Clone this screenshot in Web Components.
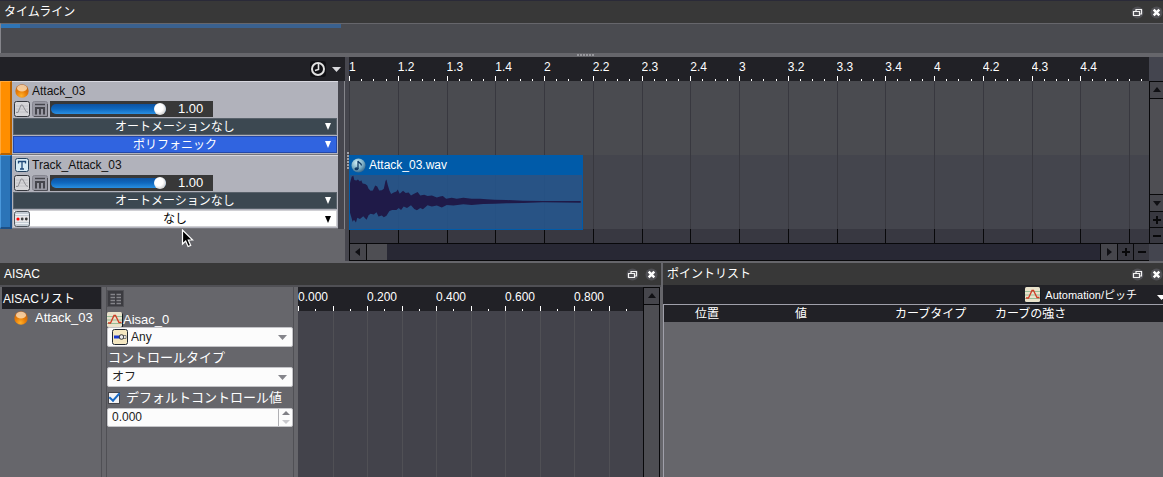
<!DOCTYPE html>
<html lang="ja">
<head>
<meta charset="utf-8">
<title>タイムライン</title>
<style>
html{height:100%}
body{margin:0;min-height:100%;display:flex;background:#66666b;color:#fff;font:12px/16px "Liberation Sans","Noto Sans CJK JP",sans-serif;overflow:hidden}
</style>
</head>
<body>
<audio-workspace></audio-workspace>
<script>
const ICONS = {
  clock: [16,16,'<rect width="16" height="16" rx="3" fill="#101014"/><circle cx="8" cy="8" r="6" fill="none" stroke="#e0e0e0" stroke-width="2"/><path d="M8.5 3v5.5L5 9.5" fill="none" stroke="#e0e0e0" stroke-width="1.6"/>'],
  ball: [14,14,'<defs><radialGradient id="g" cx=".45" cy=".85" r=".8"><stop offset="0" stop-color="#ffb02a"/><stop offset=".5" stop-color="#e87c05"/><stop offset="1" stop-color="#b86420"/></radialGradient></defs><circle cx="7" cy="7" r="6.7" fill="url(#g)"/><ellipse cx="7" cy="4.2" rx="5" ry="3.4" fill="#ffe6c4" opacity=".75"/>'],
  curveGray: [16,16,'<rect x=".5" y=".5" width="15" height="15" rx="2" fill="#d6d6d9" stroke="#34363c"/><path d="M2 5h12M2 8h12M2 11h12" stroke="#bdbdc2" stroke-width=".8"/><path d="M2 11.500h2L7 4h1.500L12 10.500l2 1" fill="none" stroke="#909095"/>'],
  mute: [16,16,'<rect x=".5" y=".5" width="15" height="15" rx="2" fill="#9898a2" stroke="#85858f"/><path d="M2 15.500h13.500V3" fill="none" stroke="#4e4e55"/><path d="M3 3.500h10" stroke="#45454c" stroke-width="1.400"/><path d="M4 13.500V7h8v6.500M8 7v6.500" fill="none" stroke="#45454c" stroke-width="2"/>'],
  track: [14,14,'<rect x=".5" y=".5" width="13" height="13" rx="2" fill="#d7ebf6" stroke="#24425f"/><path d="M3.500 5.500V3.500h7v2M7 3.500V11M5 11h4" fill="none" stroke="#1c4777" stroke-width="1.300"/>'],
  dots: [16,16,'<rect x=".5" y=".5" width="15" height="15" rx="2" fill="#c3cbd3" stroke="#4f555c"/><path d="M1.500 3.500h13M1.500 12.500h13" stroke="#eef2f5"/><rect x="1" y="5" width="14" height="6" fill="#e6e6e8"/><circle cx="4" cy="8" r="1.600" fill="#f00"/><circle cx="8.200" cy="8" r="1.400" fill="#444"/><circle cx="12.300" cy="8" r="1.400" fill="#333"/>'],
  curve: [16,16,'<rect x="1" y="1" width="15" height="15" rx="2" fill="#141a22"/><rect width="15" height="15" rx="1.500" fill="#e9e2cb"/><path d="M0 4.500h15M0 8h15M0 11.500h15" stroke="#97bd98"/><path d="M1 11h2.500L7 3.500h1.500L12 10.500h2.500" fill="none" stroke="#cf3b25" stroke-width="1.300"/>'],
  knob: [16,16,'<rect x=".5" y=".5" width="15" height="15" rx="2" fill="#f4e7c1" stroke="#202832"/><path d="M2 6.500h7v3H2z" fill="#1838d0"/><path d="M9 6.500h5v3H9z" fill="#fff" stroke="#555" stroke-width=".7"/><circle cx="9.500" cy="8" r="2.300" fill="#e8e8e8" stroke="#333"/>'],
  table: [17,17,'<rect x=".5" y=".5" width="16" height="16" fill="#3b3b40" stroke="#505055"/><path d="M3.500 4.500h4.500M3.500 7.500h4.500M3.500 10.500h4.500M3.500 13.500h4.500M9.500 4.500h4.500M9.500 7.500h4.500M9.500 10.500h4.500M9.500 13.500h4.500" stroke="#85858a" stroke-width="1.300"/>'],
  note: [15,15,'<defs><radialGradient id="g" cx=".4" cy=".3" r=".75"><stop offset="0" stop-color="#d5f2f8"/><stop offset=".6" stop-color="#77abc2"/><stop offset="1" stop-color="#315f83"/></radialGradient></defs><circle cx="7.500" cy="7.500" r="7" fill="url(#g)"/><path d="M7 11V3c.5 2 3.500 2 3.500 4.500" fill="none" stroke="#123c66" stroke-width="1.300"/><ellipse cx="5.500" cy="10.800" rx="2" ry="1.500" fill="#123c66"/>'],
  float: [13,13,'<circle cx="6.500" cy="6.500" r="6" fill="#505055"/><path d="M5 5.500V3.500h5.500V8H8.500M2.500 5.500h6v4h-6z" fill="none" stroke="#f2f2f2" stroke-width="1.200"/>'],
  close: [13,13,'<circle cx="6.500" cy="6.500" r="6" fill="#505055"/><path d="M3.700 3.700l5.600 5.600M9.300 3.700l-5.600 5.600" stroke="#fff" stroke-width="2.500"/>'],
  caret: [9,5,'<path d="M0 0h9L4.500 5z" fill="currentColor"/>'],
  tri: [6,7,'<path d="M0 0h6L3 7z" fill="currentColor"/>'],
  up: [8,8,'<path d="M0 6h8L4 1z" fill="#101014"/>'],
  down: [8,8,'<path d="M0 2h8L4 7z" fill="#101014"/>'],
  left: [8,8,'<path d="M6 0v8L1 4z" fill="#101014"/>'],
  right: [8,8,'<path d="M2 0v8l5-4z" fill="#101014"/>'],
  plus: [8,8,'<path d="M0 4h8M4 0v8" stroke="#08080a" stroke-width="2"/>'],
  minus: [8,8,'<path d="M0 4h8" stroke="#08080a" stroke-width="2"/>'],
  pointer: [13,19,'<path d="M1.500 1v14l3.200-3 2.400 5.500 2.600-1.100-2.400-5.400h4.400z" fill="#000" stroke="#fff" stroke-width="1.200"/>']
};
const define = (name, render) => customElements.define(name, class extends HTMLElement {
  connectedCallback() {
    if (this.shadowRoot) return;
    const t = document.createElement('template');
    t.innerHTML = '<style>*{box-sizing:border-box}button{appearance:none;border:0;margin:0;padding:0;background:none;color:inherit;font:inherit;display:flex;align-items:center;justify-content:center}</style>' + render(this);
    this.attachShadow({mode: 'open'}).append(t.content.cloneNode(true));
  }
});

define('ui-icon', el => {
  const [w, h, art] = ICONS[el.getAttribute('name')];
  return `<style>:host{display:block;flex:none}svg{display:block}</style>
  <svg width="${w}" height="${h}" viewBox="0 0 ${w} ${h}" aria-hidden="true">${art}</svg>`;
});

/* Dock panel: title bar with float and close buttons, body in the slot */
define('dock-panel', el => `<style>
:host{display:flex;flex-direction:column;min-width:0;background:#66666b}
header{display:flex;align-items:center;height:22px;flex:none;background:#383838;padding:0 var(--end,0) 0 4px}
h2{flex:1;margin:0;font:12px/22px "Liberation Sans","Noto Sans CJK JP",sans-serif}
button{width:13px;height:13px;margin-left:6px}
</style>
<header><h2>${el.getAttribute('heading')}</h2><button aria-label="フロート"><ui-icon name="float"></ui-icon></button><button aria-label="閉じる"><ui-icon name="close"></ui-icon></button></header>
<slot></slot>`);

/* Flat drop-down of a track header */
define('track-select', el => `<style>
:host{display:grid;grid-template-columns:1fr;height:17px;border:1px solid var(--edge,#58616a);background:var(--fill,#3c4851);color:var(--ink,#fff)}
:host([kind=play]){--fill:#3064e0;--edge:#2448a8}
:host([kind=white]){--fill:#fff;--edge:#d0d0d4;--ink:#000}
select{grid-area:1/1;appearance:none;width:100%;height:15px;border:0;padding:1px 0 0;margin:0;background:none;color:inherit;font:12px/14px "Liberation Sans","Noto Sans CJK JP",sans-serif;text-align-last:center}
.tri{grid-area:1/1;justify-self:end;align-self:center;margin-right:5px;pointer-events:none}
.lead{grid-area:1/1;justify-self:start;align-self:center}
</style>
<select aria-label="${el.getAttribute('label')}"><option>${el.getAttribute('value')}</option></select>
${el.hasAttribute('icon') ? `<ui-icon class="lead" name="${el.getAttribute('icon')}"></ui-icon>` : ''}
<ui-icon class="tri" name="tri"></ui-icon>`);

define('volume-slider', () => `<style>
:host{display:flex;align-items:center;width:163px;height:16px;background:#383838;color:#fff}
input{appearance:none;width:115px;height:12px;margin:0 0 0 1px;background:none}
input::-webkit-slider-runnable-track{height:10px;border-radius:5px;background:linear-gradient(#0e52a0,#0f69c0 50%,#2a8fe0)}
input::-webkit-slider-thumb{appearance:none;width:12px;height:12px;margin-top:-1px;border-radius:50%;background:radial-gradient(circle at 40% 40%,#fff 40%,#aaa)}
output{margin-left:12px;font-size:13px;line-height:16px}
</style><input type="range" min="0" max="1" step="0.01" value="1" aria-label="ボリューム"><output>1.00</output>`);

define('track-header', el => `<style>
:host{display:grid;grid-template-columns:12px 1fr 7px;height:74px;background:#b1b2bb;color:#111}
.strip{background:var(--strip);border:1px solid var(--lit);border-right:2px solid var(--shade);border-bottom:2px solid var(--shade)}
.main{min-width:0;border-top:1px solid #d8d8e0;border-bottom:1px solid #77777d;padding:1px 1px 0 1px;display:flex;flex-direction:column;gap:1px}
.name{display:flex;align-items:center;gap:3px;height:16px;padding-left:2px;line-height:14px}
.ctl{display:flex;gap:2px;height:16px;margin:1px 0 0 1px}
.tail{background:#46464e;border-right:1px solid #85858b}
</style>
<div class="strip"></div>
<div class="main">
<div class="name"><ui-icon name="${el.getAttribute('icon')}"></ui-icon><span>${el.getAttribute('name')}</span></div>
<div class="ctl"><button aria-label="オートメーション"><ui-icon name="curveGray"></ui-icon></button><button aria-label="ミュート"><ui-icon name="mute"></ui-icon></button><volume-slider></volume-slider></div>
<slot></slot></div><div class="tail"></div>`);

/* Ruler of the timeline: sixteen beats and the start of the next */
define('beat-ruler', () => {
  const names = ['1','1.2','1.3','1.4','2','2.2','2.3','2.4','3','3.2','3.3','3.4','4','4.2','4.3','4.4',''];
  return `<style>
:host{display:grid;grid-template-columns:repeat(16,minmax(0,39fr)) minmax(0,16fr);height:24px;background:#212126;overflow:hidden}
.beat{display:flex;flex-direction:column;justify-content:space-between;line-height:20px;overflow:hidden}
.ticks{display:grid;grid-template-columns:repeat(4,1fr);align-items:end;height:5px;flex:none;margin-top:-1px}
i{width:1px;height:2px;background:#fff}i:first-child{height:5px}
.beat:last-child .ticks{grid-template-columns:12px 1fr}.beat:last-child i:first-child{height:2px}
</style>` + names.map((n, k) => `<div class="beat"><span>${n || '&nbsp;'}</span><div class="ticks">${'<i></i>'.repeat(k < 16 ? 4 : 2)}</div></div>`).join('');
});

define('beat-lines', () => `<style>
:host{display:grid;grid-template-columns:repeat(16,minmax(0,39fr)) minmax(0,16fr)}
i{border-left:1px solid var(--line,#38383f)}
</style>` + '<i></i>'.repeat(17));

define('wave-clip', el => `<style>
:host{display:flex;flex-direction:column;position:relative;border:1px solid #005ba9;border-top:0;height:75px;background:rgba(34,86,144,.84)}
header{display:flex;align-items:center;gap:3px;height:20px;flex:none;background:#005ba9;padding-left:1px;line-height:18px}
svg{display:block;width:100%;height:54px}
</style>
<header><ui-icon name="note"></ui-icon><span>${el.getAttribute('name')}</span></header>
<svg viewBox="28 90 700 164" preserveAspectRatio="none"><path fill="#1f1a48" d="M28 115L33 95 38 92 41 105 47 107 52 104 58 110 62 106 66 116 74 117 80 122 84 132 90 138 97 137 104 122 110 125 116 137 124 136 130 132 135 108 138 104 142 120 147 137 152 148 160 143 168 140 172 134 178 147 188 138 196 145 205 143 212 152 220 148 232 142 240 152 252 150 262 154 275 152 290 158 300 155 308 154 318 162 335 159 350 162 370 159 395 162 420 162 440 164 465 165 500 166 550 168 610 169 724 169V174L610 173 550 175 500 176 465 177 430 178 395 181 370 179 340 183 320 181 305 189 290 183 275 186 262 182 248 194 240 190 230 197 222 193 212 182 200 190 190 186 182 196 175 190 168 196 155 196 147 199 138 214 130 218 124 213 114 216 108 203 100 210 90 208 84 212 78 226 68 215 58 224 50 220 46 234 40 226 36 232 28 205z"/></svg>`);

define('time-line', () => `<style>
:host{display:block}
.overview{height:30px;border-top:1px solid #66666b;border-left:1px solid #85858b;background:#4a4b50}
.range{width:340px;height:4px;background:linear-gradient(90deg,#2f75b5 19px,#3a618f 19px)}
.split{height:4px;background:#66666b;display:flex;justify-content:center;padding-left:8px}
.grip{width:17px;height:2px;margin-top:1px;background:repeating-linear-gradient(90deg,#98989d 0 2px,#66666b 2px 3px)}
.body{display:grid;grid-template-columns:345px 4px minmax(0,1fr) 14px}
.bar{height:24px;background:#212126;display:flex;justify-content:flex-end;align-items:center;gap:6px;padding-right:4px;color:#d8d8dc}
.a{--strip:#ff8e00;--lit:#ffa83c;--shade:#b86200}
.b{--strip:#2b74b8;--lit:#4a98dc;--shade:#1c4f86}
.gap{background:#46464e;display:flex;align-items:flex-start;justify-content:flex-end}
.gap i{width:2px;height:17px;margin-top:95px;background:repeating-linear-gradient(#a0a0a5 0 2px,#46464e 2px 3px)}
.lanes{display:grid;grid-template-columns:minmax(0,234fr) minmax(0,566fr);grid-template-rows:74px 74px 14px}
.lanes>*{grid-column:1/-1}
.l1{grid-row:1;background:#4a4b50}.l2{grid-row:2;background:#44454d}.l3{grid-row:3;background:#383841;--line:#08080a}
.lanes wave-clip{grid-column:1;grid-row:2}
.hs{display:flex;height:18px;background:#08080a;padding:1px 0;gap:1px}
.hs button{width:16px;background:#46464c}.hs .z{width:15px;background:#383840}
.hs .first{margin-left:1px}.thumb{width:20px;background:#4e4e53}.rail{flex:1;background:#282834;margin-left:-1px}
.vs{display:flex;flex-direction:column;background:#08080a;gap:1px;padding-left:1px}
.vs>*{flex:none}.corner{height:24px;background:#44454f;margin-left:-1px}.vs button{height:16px;background:#46464c}
.vs .z{height:15px;background:#383840}.vs .fill{flex:1;background:#4e4e53}.vs .end{height:17px;background:#44454f;margin-left:-1px}
</style>
<div class="overview"><div class="range"></div></div>
<div class="split"><div class="grip"></div></div>
<div class="body">
<div><div class="bar"><ui-icon name="clock"></ui-icon><ui-icon name="caret"></ui-icon></div>
<track-header class="a" icon="ball" name="Attack_03"><track-select label="オートメーション" value="オートメーションなし"></track-select><track-select kind="play" label="再生タイプ" value="ポリフォニック"></track-select></track-header>
<track-header class="b" icon="track" name="Track_Attack_03"><track-select label="オートメーション" value="オートメーションなし"></track-select><track-select kind="white" icon="dots" label="トラック遷移" value="なし"></track-select></track-header></div>
<div class="gap"><i></i></div>
<div><beat-ruler></beat-ruler>
<div class="lanes"><beat-lines class="l1"></beat-lines><beat-lines class="l2"></beat-lines><beat-lines class="l3"></beat-lines><wave-clip name="Attack_03.wav"></wave-clip></div>
<div class="hs"><button class="first" aria-label="左"><ui-icon name="left"></ui-icon></button><div class="thumb"></div><div class="rail"></div><button aria-label="右"><ui-icon name="right"></ui-icon></button><button class="z" aria-label="横に拡大"><ui-icon name="plus"></ui-icon></button><button class="z" aria-label="横に縮小"><ui-icon name="minus"></ui-icon></button></div></div>
<div class="vs"><div class="corner"></div><button aria-label="上"><ui-icon name="up"></ui-icon></button><div class="fill"></div><button aria-label="下"><ui-icon name="down"></ui-icon></button><button class="z" aria-label="縦に拡大"><ui-icon name="plus"></ui-icon></button><button class="z" aria-label="縦に縮小"><ui-icon name="minus"></ui-icon></button><div class="end"></div></div>
</div>`);

define('form-select', el => `<style>
:host{display:grid;height:20px;background:#fcfcfc;border:1px solid #c4c4c8;border-radius:2px;color:#222}
select{grid-area:1/1;appearance:none;width:100%;height:18px;border:0;margin:0;padding:0 20px 0 4px;background:none;color:inherit;font:12px/18px "Liberation Sans","Noto Sans CJK JP",sans-serif}
:host([icon]) select{padding-left:23px}
.lead{grid-area:1/1;place-self:center start;margin-left:4px}
.tri{grid-area:1/1;place-self:center end;margin-right:5px;color:#85858b;pointer-events:none}
</style><select aria-label="${el.getAttribute('label')}"><option>${el.getAttribute('value')}</option></select>
${el.hasAttribute('icon') ? `<ui-icon class="lead" name="${el.getAttribute('icon')}"></ui-icon>` : ''}<ui-icon class="tri" name="caret"></ui-icon>`);

define('aisac-form', () => `<style>
:host{display:flex;flex-direction:column;border:solid #505055;border-width:0 1px;padding-top:3px}
.tool{width:17px;height:17px}
.name{display:flex;align-items:center;height:15px;margin-top:5px;font-size:13px}
.type{font:13px/20px "Liberation Sans","Noto Sans CJK JP",sans-serif;height:20px;padding:1px 0 0 1px}
.check{display:flex;align-items:center;gap:6px;height:21px;font:13px/20px "Liberation Sans","Noto Sans CJK JP",sans-serif}
.check input{appearance:none;width:12px;height:12px;margin:0 0 0 1px;border:1px solid #45454a;background:#f2f2f4;display:grid;overflow:visible}
.check input::before{content:"";width:9px;height:4px;border:solid #1769c4;border-width:0 0 2px 2px;transform:rotate(-48deg)}
.spin{display:flex;height:19px;background:#fcfcfc;border:1px solid #c4c4c8;border-radius:2px;color:#222}
.spin input{flex:1;min-width:0;border:0;margin:0;padding:0 4px;background:none;color:inherit;font:12px/17px "Liberation Sans",sans-serif}
.steps{width:14px;border-left:1px solid #b0b0b4;display:grid;grid-template-rows:1fr 1fr}
.steps svg{display:block}
</style>
<button class="tool" aria-label="表"><ui-icon name="table"></ui-icon></button>
<div class="name"><ui-icon name="curve"></ui-icon><span>Aisac_0</span></div>
<form-select icon="knob" label="コントロール" value="Any"></form-select>
<div class="type">コントロールタイプ</div>
<form-select label="コントロールタイプ" value="オフ"></form-select>
<label class="check"><input type="checkbox" checked><span>デフォルトコントロール値</span></label>
<div class="spin"><input type="text" value="0.000" aria-label="デフォルトコントロール値"><div class="steps"><button aria-label="増やす"><svg width="8" height="4"><path d="M0 4h8L4 0z" fill="#808086"/></svg></button><button aria-label="減らす"><svg width="8" height="4"><path d="M0 0h8L4 4z" fill="#c8c8cc"/></svg></button></div></div>`);

define('aisac-graph', () => `<style>
:host{display:grid;grid-template-columns:minmax(0,1fr) 17px;background:#43434b}
.plot{display:grid;grid-template-columns:repeat(5,minmax(0,1fr));grid-template-rows:24px 1fr}
.head{background:#212126;display:flex;flex-direction:column;justify-content:space-between;line-height:20px}
.ticks{display:grid;grid-template-columns:repeat(4,1fr);height:5px;align-items:end;margin-top:-1px}
.ticks i{width:1px;height:2px;background:#fff}.ticks i:nth-child(odd){height:5px}
.cell{display:grid;grid-template-columns:1fr 1fr}.cell b{border-left:1px solid #505055}.cell:first-of-type b:first-child{border:0}
.vs{display:flex;flex-direction:column;gap:1px;background:#08080a;padding:1px 1px 0}
.vs button{height:16px;background:#46464c}.vs div{flex:1;background:#4e4e53}
</style>
<div class="plot">${['0.000','0.200','0.400','0.600','0.800'].map(n => `<section class="head"><span>${n}</span><div class="ticks"><i></i><i></i><i></i><i></i></div></section>`).join('')}${'<div class="cell"><b></b><b></b></div>'.repeat(5)}</div>
<div class="vs"><button aria-label="上"><ui-icon name="up"></ui-icon></button><div></div></div>`);

define('aisac-view', () => `<style>
:host{flex:1;display:grid;grid-template-columns:100px 188px minmax(0,1fr);column-gap:4px;border-top:2px solid #505055;padding-left:2px;padding-right:1px}
.list{border-right:1px solid #505055}
h3{margin:0;height:22px;padding-left:1px;background:#212126;font:12px/24px "Liberation Sans","Noto Sans CJK JP",sans-serif}
.item{display:flex;align-items:center;gap:7px;height:18px;padding-left:12px;font-size:13px}
</style>
<div class="list"><h3>AISACリスト</h3><div class="item"><ui-icon name="ball"></ui-icon><span>Attack_03</span></div></div>
<aisac-form></aisac-form><aisac-graph></aisac-graph>`);

define('point-list', () => `<style>
:host{flex:1;display:flex;flex-direction:column}
.bar{display:flex;align-items:center;justify-content:flex-end;height:19px;background:#212126;font:11px/18px "Liberation Sans","Noto Sans CJK JP",sans-serif;overflow:hidden}
.bar span{margin:0 20px 0 4px}.bar .menu{align-self:flex-end;margin:0 -3px 4px 0}
.wrap{flex:1;border:solid #a0a0aa;border-width:1px 0 0 1px}
table{border-collapse:collapse;table-layout:fixed;width:100%;background:#212126}
th{height:17px;padding:1px 0 0 1px;text-align:left;font:12px/16px "Liberation Sans","Noto Sans CJK JP",sans-serif}
th:first-child{width:30px}th{width:100px}th:last-child{width:auto}
</style>
<div class="bar"><ui-icon name="curve"></ui-icon><span>Automation/ピッチ</span><ui-icon class="menu" name="caret"></ui-icon></div>
<div class="wrap"><table><thead><tr><th></th><th>位置</th><th>値</th><th>カーブタイプ</th><th>カーブの強さ</th></tr></thead></table></div>`);

define('audio-workspace', () => `<style>
:host{flex:1;min-width:0;display:flex;flex-direction:column}
.top{border-top:1px solid #2a2a38}
.bottom{flex:1;display:grid;grid-template-columns:minmax(0,661fr) minmax(0,500fr);gap:2px;margin-top:2px}
.aisac{--end:3px}
.pointer{position:absolute;left:181px;top:229px}
</style>
<dock-panel class="top" heading="タイムライン"><time-line></time-line></dock-panel>
<div class="bottom"><dock-panel class="aisac" heading="AISAC"><aisac-view></aisac-view></dock-panel><dock-panel heading="ポイントリスト"><point-list></point-list></dock-panel></div>
<ui-icon class="pointer" name="pointer"></ui-icon>`);
</script>
</body>
</html>
